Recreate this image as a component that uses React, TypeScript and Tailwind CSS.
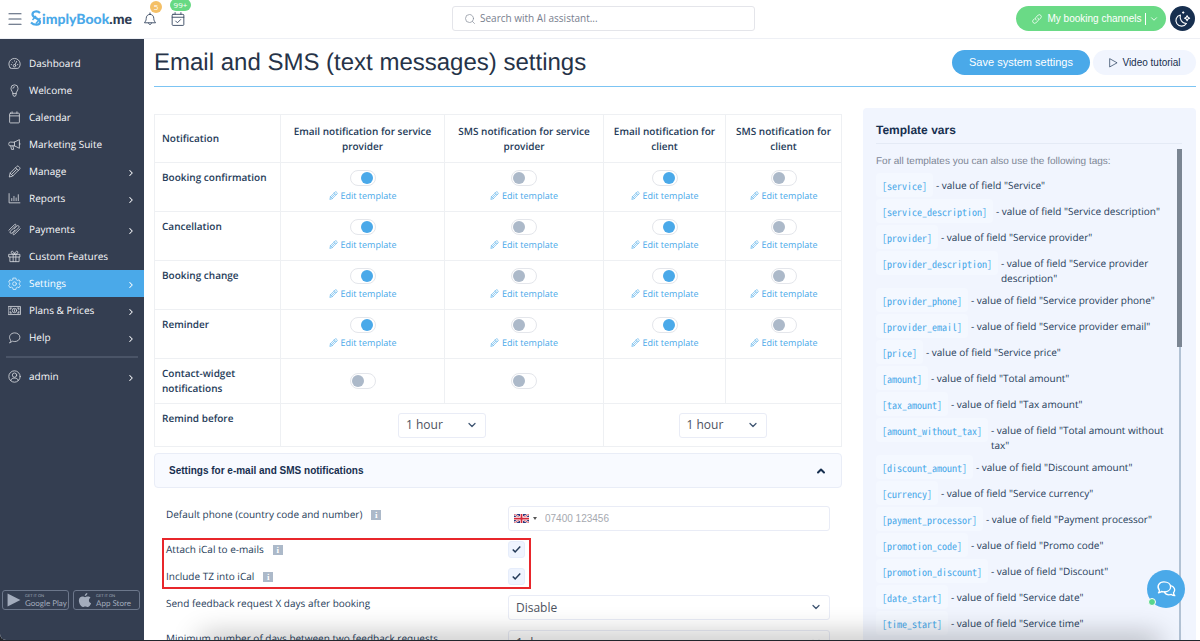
import React from 'react';
import { ChevronDown, ChevronRight, ChevronUp, Menu, Search } from 'lucide-react';

type IconProps = { className?: string; children: React.ReactNode };

const Icon: React.FC<IconProps> = ({ className = 'size-3.5', children }) => (
  <svg
    viewBox="0 0 24 24"
    fill="none"
    stroke="currentColor"
    strokeWidth={1.6}
    strokeLinecap="round"
    strokeLinejoin="round"
    className={`shrink-0 ${className}`}
    aria-hidden="true"
  >
    {children}
  </svg>
);

const icons = {
  dashboard: (
    <>
      <path d="M4 20a10.500 10.500 0 1 1 16 0q-1 1-2 1H6q-1 0-2-1z" />
      <circle cx="12" cy="16" r="2.200" />
      <path d="M13 14l3-6M6 14h.5M7.500 9.500l.3.3M12 7v.5M17.500 14h.5" />
    </>
  ),
  bulb: (
    <>
      <path d="M9 17c0-3-3.500-4.500-3.500-9a6.500 6.500 0 0 1 13 0c0 4.500-3.500 6-3.500 9z" />
      <path d="M9 17v3l1.500 2.500h3L15 20v-3M9 8a3 3 0 0 1 3-3" />
    </>
  ),
  calendar: (
    <>
      <rect x="3" y="4" width="18" height="18" rx="1.500" />
      <path d="M3 9h18M7.500 1.500V4M16.500 1.500V4" />
    </>
  ),
  megaphone: (
    <path d="M12 7.500L21 3v16l-9-4.500H4A2.500 2.500 0 0 1 1.500 12v-2A2.500 2.500 0 0 1 4 7.500zM12 7.500v7M5 14.500L6.500 21h4L9 14.500M21 9c2 0 2 4 0 4" />
  ),
  pencil: (
    <>
      <path d="M2.500 21.500l1.500-6.500L16.500 2.500a2 2 0 0 1 2.900 0l2.100 2.100a2 2 0 0 1 0 2.900L9 20z" />
      <path d="M14 5l5 5M4 15l5 5M7.500 16.500l8-8" />
    </>
  ),
  chart: <path d="M2 3v17h20M7 16v-4M11 16V8M15 16v-5M19 16V5" />,
  payments: (
    <path d="M1.500 13.500L12 3c1.800-1.800 4 .4 2.200 2.200L4.500 15c-2.500 2.500.8 5.800 3.300 3.300L13 13M22.500 10.500L12 21c-1.800 1.800-4-.4-2.200-2.200L19.500 9c2.500-2.500-.8-5.800-3.300-3.300L11 11" />
  ),
  gift: (
    <path d="M2 8h20v5H2zM3.500 13v8.500h17V13M9.500 8v13.500M14.500 8v13.500M12 8C8 8 5 6.500 6 3.500S11 3 12 8c1-5 5-7.500 6-4.500S16 8 12 8z" />
  ),
  settings: (
    <>
      <path d="M9.500 2h5l.7 3 2.300 1.300 3-1 2.300 4.200-2.200 2v2l2.200 2-2.300 4.200-3-1-2.300 1.300-.7 3h-5l-.7-3-2.300-1.300-3 1-2.300-4.200 2.200-2v-2l-2.200-2 2.300-4.200 3 1L8.800 5z" />
      <circle cx="12" cy="12.500" r="3.500" />
    </>
  ),
  money: (
    <>
      <rect x="1" y="4.500" width="22" height="15" />
      <circle cx="12" cy="12" r="4" />
      <path d="M4 7.500h3M4 7.500v3M20 16.500h-3M20 16.500v-3M20 7.500h-3M20 7.500v3M4 16.500h3M4 16.500v-3M12 10.500v3" />
    </>
  ),
  help: (
    <path d="M3.500 21.500c1.500-1 2-3 1-5C.5 11 4 3.500 12.500 3.500c5 0 9.500 3.500 9.500 8s-4.500 8-9.500 8c-2 0-3.500-.5-4.500-1-1.500 2-3 3-4.500 3z" />
  ),
  user: (
    <>
      <circle cx="12" cy="12" r="10.500" />
      <circle cx="12" cy="9.500" r="4" />
      <path d="M5 19.500c1-4 4-4.500 7-4.500s6 .5 7 4.500" />
    </>
  ),
  bell: (
    <path d="M12 1.500V4M12 4c-4 0-6.500 3-6.500 7 0 4-1.500 5-3 7.500h19c-1.500-2.500-3-3.500-3-7.500 0-4-2.500-7-6.500-7zM9.500 19c0 3.500 5 3.500 5 0" />
  ),
  calendarCheck: (
    <>
      <rect x="2" y="4" width="20" height="19" rx="1.500" />
      <path d="M2 9h20M7 1v3M17 1v3M8 15.500l3 3 5.500-5.500" />
    </>
  ),
  link: (
    <path d="M10 14a4 4 0 0 1 0-5.500l4.500-4.500a4 4 0 0 1 5.500 5.500l-3 3M14 10a4 4 0 0 1 0 5.500L9.500 20A4 4 0 0 1 4 14.500l3-3" />
  ),
  moon: (
    <path d="M9 7a8 8 0 1 0 8.500 12C11 19 7.500 13 9 7zM18.500 8l1.200 2.300L22 11.500l-2.300 1.200L18.500 15l-1.200-2.300L15 11.500l2.300-1.200zM13 2.500v2M12 3.500h2" />
  ),
  play: <path d="M4 2.500v19L21 12z" />,
  chat: (
    <>
      <path d="M3 16.500c1-1 1.200-2 1-3C.5 9 3.500 3.500 9.500 3.500c4.500 0 8 2.500 8 6s-3.500 6-8 6c-1 0-2-.2-3-.5-1 1-2 1.500-3.500 1.500z" />
      <path d="M17.500 8c4 .5 6.500 5 3.500 8.500 0 1.500.5 2.500 1.500 3.500-1.500 0-3-.5-4-1.500-3.500 1-7 0-8.500-3" />
    </>
  ),
};

type MenuEntry = {
  label: string;
  icon: keyof typeof icons;
  more?: boolean;
  active?: boolean;
};

const mainMenu: MenuEntry[] = [
  { label: 'Dashboard', icon: 'dashboard' },
  { label: 'Welcome', icon: 'bulb' },
  { label: 'Calendar', icon: 'calendar' },
  { label: 'Marketing Suite', icon: 'megaphone' },
  { label: 'Manage', icon: 'pencil', more: true },
  { label: 'Reports', icon: 'chart', more: true },
];

const systemMenu: MenuEntry[] = [
  { label: 'Payments', icon: 'payments', more: true },
  { label: 'Custom Features', icon: 'gift' },
  { label: 'Settings', icon: 'settings', more: true, active: true },
  { label: 'Plans & Prices', icon: 'money', more: true },
  { label: 'Help', icon: 'help', more: true },
];

const columns = [
  'Email notification for service provider',
  'SMS notification for service provider',
  'Email notification for client',
  'SMS notification for client',
];

const notifications = ['Booking confirmation', 'Cancellation', 'Booking change', 'Reminder'];

const templateVars = [
  ['service', 'Service'],
  ['service_description', 'Service description'],
  ['provider', 'Service provider'],
  ['provider_description', 'Service provider description'],
  ['provider_phone', 'Service provider phone'],
  ['provider_email', 'Service provider email'],
  ['price', 'Service price'],
  ['amount', 'Total amount'],
  ['tax_amount', 'Tax amount'],
  ['amount_without_tax', 'Total amount without tax'],
  ['discount_amount', 'Discount amount'],
  ['currency', 'Service currency'],
  ['payment_processor', 'Payment processor'],
  ['promotion_code', 'Promo code'],
  ['promotion_discount', 'Discount'],
  ['date_start', 'Service date'],
  ['time_start', 'Service time'],
];

const MenuItem: React.FC<MenuEntry> = ({ label, icon, more, active }) => (
  <li>
    <a
      href="#"
      className={`flex h-[27px] items-center gap-2 px-2 text-[10px] ${
        active ? 'bg-[#4aa9e9] text-white' : 'text-[#f8f9fb]'
      }`}
    >
      <Icon className="size-[13px] opacity-80">{icons[icon]}</Icon>
      <span className="flex-1">{label}</span>
      {more && <ChevronRight className="mt-0.5 size-2.5" strokeWidth={2.5} />}
    </a>
  </li>
);

const Header: React.FC = () => (
  <header className="flex h-[39px] shrink-0 items-center border-b border-[#eef0f5] bg-white pr-[5px] pb-px pl-1.5">
    <button type="button" aria-label="Menu" className="text-[#4b5a70]">
      <Menu className="size-[18px]" strokeWidth={1.6} />
    </button>
    <a href="#" className="ml-1.5 flex items-center" aria-label="SimplyBook.me">
      <svg viewBox="0 0 24 34" className="h-[17px] w-3" fill="none" stroke="#4aa9e9" strokeWidth="4.500" aria-hidden="true">
        <path d="M20 6C15 1 5 2 5 9c0 8 15 7 15 15 0 7-12 7-18 1" />
        <path d="M12 12L5 20M21 16l-9 11" strokeWidth="3" />
      </svg>
      <span className="font-[Lato] text-sm leading-5 font-black text-[#2d3b52]">
        <span className="text-[#4aa9e9]">implyBook</span>.me
      </span>
    </a>
    <button type="button" aria-label="Notifications" className="relative ml-[11px] text-[#3d4d66]">
      <Icon className="size-3.5">{icons.bell}</Icon>
      <span className="absolute -top-[11px] left-[7px] flex size-3 items-center justify-center rounded-full bg-[#f4c067] text-[8px] text-white">
        5
      </span>
    </button>
    <button type="button" aria-label="Tasks" className="relative ml-3.5 text-[#3d4d66]">
      <Icon className="size-3.5">{icons.calendarCheck}</Icon>
      <span className="absolute -top-[13px] -left-px flex h-3 w-[21px] items-center justify-center rounded-full bg-[#67d983] text-[8px] text-white">
        99+
      </span>
    </button>
    <div className="flex flex-1 justify-center pl-1.5">
      <label className="flex h-[25px] w-[303px] items-center gap-1 rounded-[3px] border border-[#e4e5ea] px-[11px] text-[#8b919e]">
        <Search className="size-3 shrink-0" strokeWidth={1.5} />
        <input
          type="text"
          aria-label="Search"
          placeholder="Search with AI assistant..."
          className="w-full text-[10px] outline-none placeholder:text-[#777e8e]"
        />
      </label>
    </div>
    <button
      type="button"
      className="flex h-[25px] w-[150px] items-center rounded-full bg-[#6ada86] pr-[7px] pl-[15px] font-['Liberation_Sans'] text-[10px] text-white"
    >
      <Icon className="size-3">{icons.link}</Icon>
      <span className="ml-1 flex-1 whitespace-nowrap">My booking channels</span>
      <span className="mx-[3px] h-3 w-px shrink-0 bg-white" />
      <ChevronDown className="size-2.5 shrink-0" strokeWidth={2} />
    </button>
    <button
      type="button"
      aria-label="Dark mode"
      className="ml-1 flex size-[25px] items-center justify-center rounded-full bg-[#172f4f] text-white"
    >
      <Icon className="size-[17px]">{icons.moon}</Icon>
    </button>
  </header>
);

const StoreBadge: React.FC<{ name: string; children: React.ReactNode }> = ({ name, children }) => (
  <a href="#" className="flex h-5 w-[67px] items-center gap-1 rounded-[3px] border border-[#6c778b] pl-1 text-[#a3acbc]">
    <svg viewBox="0 0 24 24" className="size-3.5 shrink-0" fill="currentColor" aria-hidden="true">
      {children}
    </svg>
    <span className="flex flex-col font-[Lato] whitespace-nowrap">
      <span className="text-[4px] leading-[5px]">GET IT ON</span>
      <span className="text-[8px] leading-[10px]">{name}</span>
    </span>
  </a>
);

const Sidebar: React.FC = () => (
  <nav className="flex w-36 shrink-0 flex-col bg-[#343e51] pt-[11px]">
    <ul>
      {mainMenu.map((item) => (
        <MenuItem key={item.label} {...item} />
      ))}
    </ul>
    <ul className="mt-1">
      {systemMenu.map((item) => (
        <MenuItem key={item.label} {...item} />
      ))}
    </ul>
    <hr className="mx-1.5 my-[5px] border-t-2 border-[#4a5467]" />
    <ul>
      <MenuItem label="admin" icon="user" more />
    </ul>
    <div className="mt-auto mb-[30px] flex gap-1 pl-0.5">
      <StoreBadge name="Google Play">
        <path d="M1 1v22l22-11z" />
      </StoreBadge>
      <StoreBadge name="App Store">
        <path d="M16 0c.2 3-2 5-4.500 5C11.500 2.500 13.500.5 16 0zM21.500 8c-4 2-3.500 8 1 9.500-1.500 3.500-3.500 6.500-6 6.500-1.500 0-2-1-4-1s-2.500 1-4 1C5 24 1.500 17.500 1.500 13 1.500 8 4.500 6 7.500 6c2 0 3.500 1.200 4.500 1.200S14.500 6 17 6c2 0 3.500.8 4.500 2z" />
      </StoreBadge>
    </div>
  </nav>
);

const Toggle: React.FC<{ label: string; on?: boolean }> = ({ label, on }) => (
  <input
    type="checkbox"
    role="switch"
    aria-label={label}
    defaultChecked={on}
    className="block h-4 w-[26px] appearance-none rounded-full border border-[#e4e6eb] bg-white p-px before:block before:size-3 before:rounded-full before:bg-[#acb9c9] checked:before:ml-[9px] checked:before:bg-[#4aa9e9]"
  />
);

const SelectBox: React.FC<{ label: string; value: string; className?: string; id?: string }> = ({
  label,
  value,
  className = '',
  id,
}) => (
  <div className={`relative ${className}`}>
    <select
      id={id}
      aria-label={label}
      className="block h-[25px] w-full appearance-none rounded-[3px] border border-[#e9ecf6] bg-white px-[7px] text-xs text-[#4d5260]"
    >
      <option>{value}</option>
    </select>
    <ChevronDown
      className="pointer-events-none absolute top-1.5 right-2 size-3 text-[#3f5572]"
      strokeWidth={2.5}
    />
  </div>
);

const NotificationsTable: React.FC = () => (
  <table className="w-full table-fixed border-collapse text-[10px] leading-[15px] text-[#263c59] [&_td]:border [&_td]:border-[#eef0f3] [&_th]:border [&_th]:border-[#eef0f3]">
    <colgroup>
      <col className="w-[126px]" />
      <col className="w-[164px]" />
      <col className="w-[159px]" />
      <col className="w-[122px]" />
      <col className="w-[116px]" />
    </colgroup>
    <thead>
      <tr className="h-12">
        <th className="px-[7px] text-left font-semibold">Notification</th>
        {columns.map((column) => (
          <th key={column} className="px-2 font-semibold">
            {column}
          </th>
        ))}
      </tr>
    </thead>
    <tbody>
      {notifications.map((name) => (
        <tr key={name} className="h-[49px]">
          <th className="px-[7px] pt-[7px] text-left align-top font-semibold">{name}</th>
          {columns.map((column, index) => (
            <td key={column} className="pt-[7px] align-top">
              <div className="flex flex-col items-center gap-0.5">
                <Toggle label={`${name}: ${column}`} on={index % 2 === 0} />
                <a href="#" className="flex items-center gap-[3px] text-[9px] text-[#4aa9e9]">
                  <Icon className="size-[9px]">{icons.pencil}</Icon>
                  Edit template
                </a>
              </div>
            </td>
          ))}
        </tr>
      ))}
      <tr className="h-[45px]">
        <th className="px-[7px] text-left font-semibold">Contact-widget notifications</th>
        {columns.map((column, index) => (
          <td key={column}>
            {index < 2 && (
              <div className="flex justify-center">
                <Toggle label={`Contact-widget notifications: ${column}`} />
              </div>
            )}
          </td>
        ))}
      </tr>
      <tr className="h-[43px]">
        <th className="px-[7px] pt-[7px] text-left align-top font-semibold">Remind before</th>
        <td colSpan={2}>
          <SelectBox label="Remind provider before" value="1 hour" className="mx-auto w-[88px]" />
        </td>
        <td colSpan={2}>
          <SelectBox label="Remind client before" value="1 hour" className="mx-auto w-[88px]" />
        </td>
      </tr>
    </tbody>
  </table>
);

const Info: React.FC = () => (
  <span className="ml-[9px] inline-flex size-2.5 items-center justify-center bg-[#acb9c9] align-middle font-['Liberation_Serif'] text-[9px] leading-none font-bold text-white">
    i
  </span>
);

const CheckRow: React.FC<{ id: string; label: string }> = ({ id, label }) => (
  <div className="grid grid-cols-[342px_1fr] items-center">
    <label htmlFor={id} className="leading-[17px]">
      {label}
      <Info />
    </label>
    <span className="grid size-[17px] place-items-center">
      <input
        id={id}
        type="checkbox"
        defaultChecked
        className="col-start-1 row-start-1 size-[17px] appearance-none rounded-[3px] border border-[#e6edfb] bg-[#eff4fe]"
      />
      <svg
        viewBox="0 0 12 12"
        className="pointer-events-none col-start-1 row-start-1 size-[9px]"
        fill="none"
        stroke="#263c59"
        strokeWidth="2"
        aria-hidden="true"
      >
        <path d="M1 6l3.200 3.200L11 2" />
      </svg>
    </span>
  </div>
);

const SettingsForm: React.FC = () => (
  <form className="flex flex-col gap-2.5 px-3 pt-[18px] text-[10px] leading-[17px] text-[#263c59]">
    <div className="grid grid-cols-[342px_1fr] items-start">
      <label htmlFor="phone">
        Default phone (country code and number)
        <Info />
      </label>
      <div className="flex h-[25px] items-center rounded-[3px] border border-[#e9ecf6] pl-[5px]">
        <svg viewBox="0 0 30 18" className="h-[9px] w-[15px] shrink-0" aria-hidden="true">
          <path fill="#29377c" d="M0 0h30v18H0z" />
          <path stroke="#fff" strokeWidth="4" d="M0 0l30 18M30 0L0 18" />
          <path stroke="#d42b3c" strokeWidth="1.500" d="M0 0l30 18M30 0L0 18" />
          <path stroke="#fff" strokeWidth="6" d="M15 0v18M0 9h30" />
          <path stroke="#d42b3c" strokeWidth="3.500" d="M15 0v18M0 9h30" />
        </svg>
        <svg viewBox="0 0 4 3" className="ml-1 h-[3px] w-1 shrink-0" aria-hidden="true">
          <path fill="#555" d="M0 0h4L2 3z" />
        </svg>
        <input
          id="phone"
          type="text"
          placeholder="07400 123456"
          className="ml-2 w-full font-['Liberation_Sans'] text-[10px] outline-none placeholder:text-[#a6a9b0]"
        />
      </div>
    </div>
    <div className="relative flex flex-col gap-2.5">
      <CheckRow id="ical" label="Attach iCal to e-mails" />
      <CheckRow id="tz" label="Include TZ into iCal" />
      <div className="pointer-events-none absolute -top-[3px] -bottom-1 -left-1 w-[369px] border-2 border-[#e8262b]" />
    </div>
    <div className="grid grid-cols-[342px_1fr] items-start">
      <label htmlFor="feedback">Send feedback request X days after booking</label>
      <SelectBox id="feedback" label="Send feedback request X days after booking" value="Disable" />
    </div>
    <div className="grid grid-cols-[342px_1fr] items-start">
      <label htmlFor="min-days">Minimum number of days between two feedback requests</label>
      <SelectBox id="min-days" label="Minimum number of days between two feedback requests" value="1 day" />
    </div>
  </form>
);

const TemplateVars: React.FC = () => (
  <aside className="flex w-[333px] shrink-0 flex-col rounded-t bg-[#f1f5fe] pr-3.5 pl-[13px]">
    <h2 className="mt-3.5 border-b border-[#e4eaf5] pb-[5px] font-['Liberation_Sans'] text-xs leading-4 font-bold text-[#172f4f]">
      Template vars
    </h2>
    <div className="mt-[5px] flex min-h-0 flex-1">
      <div className="min-w-0 flex-1 overflow-hidden">
        <p className="mt-[5px] mb-[3px] font-['Liberation_Sans'] text-[10px] leading-4 text-[#7d8695]">
          For all templates you can also use the following tags:
        </p>
        <ul className="text-[10px] leading-[15px] text-[#263c59]">
          {templateVars.map(([tag, field]) => (
            <li key={tag} className="mb-0.5 flex items-start gap-[3px]">
              <code className="flex h-6 items-center rounded bg-[#f4f8ff] px-1.5 font-['Noto_Sans_Mono_CJK_SC','DejaVu_Sans_Mono',monospace] text-[10px] text-[#4aa9e9]">
                {`[${tag}]`}
              </code>
              <span className="pt-[5px]">{`- value of field "${field}"`}</span>
            </li>
          ))}
        </ul>
      </div>
      <div className="flex w-[5px] shrink-0 flex-col items-center">
        <span className="h-[198px] w-[5px] bg-[#7b8592]" />
        <span className="w-0.5 flex-1 bg-[#b2c2d4]" />
      </div>
    </div>
  </aside>
);

const App: React.FC = () => {
  return (
    <div className="h-screen bg-[#22262c] pb-px font-['Open_Sans',sans-serif] [text-rendering:geometricPrecision]">
      <div className="relative flex h-full flex-col overflow-hidden rounded-bl-md bg-white">
        <Header />
        <div className="flex min-h-0 flex-1">
          <Sidebar />
          <main className="flex min-w-0 flex-1 flex-col overflow-hidden pr-1 pl-2.5">
            <div className="flex h-12 shrink-0 items-center gap-[3px] border-b border-[#7cc4f3]">
              <h1 className="flex-1 font-['Liberation_Sans'] text-2xl text-[#263348]">
                Email and SMS (text messages) settings
              </h1>
              <button
                type="button"
                className="h-[25px] w-[138px] rounded-full bg-[#4aa9e9] font-['Liberation_Sans'] text-[11px] text-white"
              >
                Save system settings
              </button>
              <button
                type="button"
                className="flex h-[25px] w-[103px] items-center justify-center gap-1 rounded-full bg-[#f1f5fe] font-['Liberation_Sans'] text-[10px] text-[#172f4f]"
              >
                <Icon className="size-2.5">{icons.play}</Icon>
                Video tutorial
              </button>
            </div>
            <div className="flex min-h-0 flex-1 gap-[21px] pt-[21px]">
              <div className="min-w-0 flex-1 pt-1.5">
                <NotificationsTable />
                <section className="mt-1.5">
                  <button
                    type="button"
                    className="flex h-[35px] w-full items-center justify-between rounded border border-[#e9edf7] bg-[#f8faff] px-3.5 font-['Liberation_Sans'] text-[10px] font-bold text-[#172f4f]"
                  >
                    Settings for e-mail and SMS notifications
                    <ChevronUp className="size-3" strokeWidth={4} />
                  </button>
                  <SettingsForm />
                </section>
              </div>
              <TemplateVars />
            </div>
          </main>
        </div>
        {/* soft shade along the bottom edge of the window */}
        <div className="pointer-events-none absolute right-12 -bottom-2 left-52 h-1 shadow-[0_0_28px_8px_rgba(0,0,0,0.3)]" />
        <button
          type="button"
          aria-label="Open chat"
          className="absolute right-[15px] bottom-8 flex size-[38px] items-center justify-center rounded-full bg-[#4aa9e9] text-white"
        >
          <Icon className="size-5">{icons.chat}</Icon>
          <span className="absolute bottom-0.5 left-px size-2 rounded-full border border-white bg-[#58d68d]" />
        </button>
      </div>
    </div>
  );
};

export default App;
